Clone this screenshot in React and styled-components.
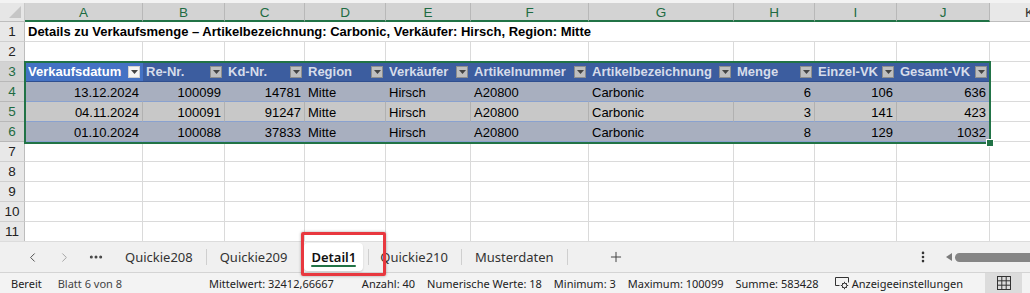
import React from "react";
import styled, { createGlobalStyle } from "styled-components";
import { ChevronLeft, ChevronRight, MoreHorizontal, Plus, MoreVertical } from "lucide-react";

const GREEN = "#217346";

const GlobalStyle = createGlobalStyle`
  html, body {
    margin: 0;
    padding: 0;
    background: #ffffff;
    overflow: hidden;
  }
  body {
    font-family: "Liberation Sans", Arial, sans-serif;
  }
`;

const columns = [
  { key: "A", width: 118 },
  { key: "B", width: 82 },
  { key: "C", width: 80 },
  { key: "D", width: 81 },
  { key: "E", width: 85 },
  { key: "F", width: 118 },
  { key: "G", width: 145 },
  { key: "H", width: 81 },
  { key: "I", width: 82 },
  { key: "J", width: 93 },
  { key: "K", width: 80 },
];

const headers = [
  "Verkaufsdatum",
  "Re-Nr.",
  "Kd-Nr.",
  "Region",
  "Verkäufer",
  "Artikelnummer",
  "Artikelbezeichnung",
  "Menge",
  "Einzel-VK",
  "Gesamt-VK",
];

const rightAligned = [true, true, true, false, false, false, false, true, true, true];

const rows = [
  ["13.12.2024", "100099", "14781", "Mitte", "Hirsch", "A20800", "Carbonic", "6", "106", "636"],
  ["04.11.2024", "100091", "91247", "Mitte", "Hirsch", "A20800", "Carbonic", "3", "141", "423"],
  ["01.10.2024", "100088", "37833", "Mitte", "Hirsch", "A20800", "Carbonic", "8", "129", "1032"],
];

const tabs = ["Quickie208", "Quickie209", "Detail1", "Quickie210", "Musterdaten"];
const activeTab = "Detail1";

const stats = [
  "Mittelwert: 32412,66667",
  "Anzahl: 40",
  "Numerische Werte: 18",
  "Minimum: 3",
  "Maximum: 100099",
  "Summe: 583428",
];

const App = () => {
  const emptyRows = [7, 8, 9, 10, 11];

  return (
    <Page>
      <GlobalStyle />
      <Sheet>
        <Grid>
          <Corner>
            <svg width="12" height="12" viewBox="0 0 12 12">
              <polygon points="12,0 12,12 0,12" fill="#c6c6c6" />
            </svg>
          </Corner>
          {columns.map((col) => (
            <ColHead key={col.key} $selected={col.key !== "K"}>
              {col.key}
            </ColHead>
          ))}

          <RowHead>1</RowHead>
          <TitleCell>
            Details zu Verkaufsmenge – Artikelbezeichnung: Carbonic, Verkäufer: Hirsch, Region: Mitte
          </TitleCell>
          <Cell />

          <RowHead>2</RowHead>
          {columns.map((col) => (
            <Cell key={col.key} />
          ))}

          <RowHead $selected>3</RowHead>
          {headers.map((h, i) => (
            <HeadCell key={h} $active={i === 0}>
              <span>{h}</span>
              <FilterButton $active={i === 0}>
                <svg width="7" height="4" viewBox="0 0 7 4">
                  <polygon points="0,0 7,0 3.5,4" fill="#444" />
                </svg>
              </FilterButton>
            </HeadCell>
          ))}
          <Cell />

          {rows.map((row, r) => (
            <React.Fragment key={r}>
              <RowHead $selected>{r + 4}</RowHead>
              {row.map((v, i) => (
                <DataCell key={i} $band={r % 2 === 1} $right={rightAligned[i]}>
                  {v}
                </DataCell>
              ))}
              <Cell />
            </React.Fragment>
          ))}

          {emptyRows.map((n) => (
            <React.Fragment key={n}>
              <RowHead>{n}</RowHead>
              {columns.map((col) => (
                <Cell key={col.key} />
              ))}
            </React.Fragment>
          ))}
        </Grid>
        <Selection>
          <FillHandle />
        </Selection>
      </Sheet>

      <TabBar>
        <NavButtons>
          <NavButton>
            <ChevronLeft size={15} strokeWidth={1.5} />
          </NavButton>
          <NavButton $disabled>
            <ChevronRight size={15} strokeWidth={1.5} />
          </NavButton>
          <NavButton>
            <MoreHorizontal size={16} strokeWidth={2.5} />
          </NavButton>
        </NavButtons>
        <Tabs>
          {tabs.map((t, i) => (
            <React.Fragment key={t}>
              {i > 0 && t !== activeTab && <TabSep />}
              <Tab $active={t === activeTab} $afterActive={tabs[i - 1] === activeTab}>
                {t}
              </Tab>
            </React.Fragment>
          ))}
          <TabSep />
        </Tabs>
        <AddButton>
          <Plus size={16} strokeWidth={1.5} />
        </AddButton>
        <RightTools>
          <MoreVertical size={14} strokeWidth={2.5} />
          <Scroller>
            <svg width="6" height="8" viewBox="0 0 6 8">
              <polygon points="6,0 6,8 0,4" fill="#7a7a7a" />
            </svg>
            <Thumb />
          </Scroller>
        </RightTools>
      </TabBar>

      <StatusBar>
        <StatusText>Bereit</StatusText>
        <StatusText $muted>Blatt 6 von 8</StatusText>
        <Stats>
          {stats.map((s) => (
            <StatusText key={s}>{s}</StatusText>
          ))}
          <DisplaySettings>
            <svg width="16" height="14" viewBox="0 0 16 14" fill="none" stroke="#333" strokeWidth="1">
              <path d="M1.5 9.5V1.5h13v5" />
              <path d="M1.5 9.5h4" />
              <circle cx="10.5" cy="9.5" r="2.3" />
              <path d="M10.5 5.8v1.2M10.5 12v1.2M6.8 9.5h1.2M13 9.5h1.2M8 7l.8.8M12.2 11.2l.8.8M8 12l.8-.8M12.2 7.8l.8-.8" />
            </svg>
            <StatusText>Anzeigeeinstellungen</StatusText>
          </DisplaySettings>
        </Stats>
        <ViewButton>
          <svg width="16" height="16" viewBox="0 0 16 16" fill="none" stroke="#333" strokeWidth="1">
            <rect x="1.5" y="1.5" width="13" height="13" />
            <path d="M1.5 5.8h13M1.5 10.2h13M5.8 1.5v13M10.2 1.5v13" />
          </svg>
        </ViewButton>
      </StatusBar>

      <Highlight />
    </Page>
  );
};

const Page = styled.div`
  position: relative;
  width: 1030px;
  height: 293px;
  display: flex;
  flex-direction: column;
  overflow: hidden;
`;

const Sheet = styled.div`
  position: relative;
  height: 241px;
  border-top: 3px solid #f3f3f3;
  box-sizing: border-box;
  overflow: hidden;
  flex-shrink: 0;
`;

const Grid = styled.div`
  display: grid;
  grid-template-columns: 25px ${columns.map((c) => `${c.width}px`).join(" ")};
  grid-template-rows: 19px;
  grid-auto-rows: 20px;
`;

const Corner = styled.div`
  background: #e6e6e6;
  border-right: 1px solid #c8c8c8;
  border-bottom: 1px solid #bdbdbd;
  box-sizing: border-box;
  display: flex;
  align-items: flex-end;
  justify-content: flex-end;
  padding: 0 3px 3px 0;
`;

const ColHead = styled.div`
  box-sizing: border-box;
  background: ${(p) => (p.$selected ? "#d3d3d3" : "#e8e8e8")};
  color: ${(p) => (p.$selected ? "#1e6b42" : "#333")};
  border-right: 1px solid ${(p) => (p.$selected ? "#b8b8b8" : "#c8c8c8")};
  border-bottom: ${(p) => (p.$selected ? `2px solid ${GREEN}` : "1px solid #bdbdbd")};
  display: flex;
  align-items: center;
  justify-content: center;
  font-size: 13.5px;
  padding-top: 1px;
  overflow: hidden;
`;

const RowHead = styled.div`
  box-sizing: border-box;
  background: ${(p) => (p.$selected ? "#d3d3d3" : "#e8e8e8")};
  color: ${(p) => (p.$selected ? "#1e6b42" : "#222")};
  border-right: 1px solid #bdbdbd;
  border-bottom: 1px solid ${(p) => (p.$selected ? "#b8b8b8" : "#cfcfcf")};
  display: flex;
  align-items: center;
  justify-content: center;
  font-size: 13.5px;
`;

const Cell = styled.div`
  box-sizing: border-box;
  border-right: 1px solid #dadada;
  border-bottom: 1px solid #dadada;
  background: #ffffff;
`;

const TitleCell = styled.div`
  grid-column: span 10;
  box-sizing: border-box;
  border-bottom: 1px solid #dadada;
  display: flex;
  align-items: center;
  padding-left: 3px;
  font-size: 13px;
  font-weight: bold;
  color: #000;
  white-space: nowrap;
`;

const HeadCell = styled.div`
  box-sizing: border-box;
  background: ${(p) => (p.$active ? "#4472c4" : "#3c5d9f")};
  color: ${(p) => (p.$active ? "#ffffff" : "#d6dcea")};
  border-bottom: 1px solid #2f4f8f;
  display: flex;
  align-items: center;
  padding: 0 3px;
  font-size: 13px;
  font-weight: bold;
  white-space: nowrap;
  overflow: hidden;

  span {
    flex: 1;
    overflow: hidden;
  }
`;

const FilterButton = styled.div`
  flex-shrink: 0;
  width: 12px;
  height: 12px;
  margin-left: 2px;
  box-sizing: border-box;
  background: ${(p) => (p.$active ? "#f4f4f4" : "#bfbfbf")};
  border: 1px solid ${(p) => (p.$active ? "#d0d0d0" : "#8e8e8e")};
  display: flex;
  align-items: center;
  justify-content: center;
`;

const DataCell = styled.div`
  box-sizing: border-box;
  background: ${(p) => (p.$band ? "#c8c8c8" : "#a8afbf")};
  border-bottom: 1px solid #8aa2cf;
  border-right: 1px solid ${(p) => (p.$band ? "#b1b1b1" : "#a8afbf")};
  display: flex;
  align-items: center;
  justify-content: ${(p) => (p.$right ? "flex-end" : "flex-start")};
  padding: 1px 3px 0;
  font-size: 13px;
  color: #000;
  white-space: nowrap;
`;

const Selection = styled.div`
  position: absolute;
  left: 24px;
  top: 58px;
  width: 967px;
  height: 83px;
  box-sizing: border-box;
  border: 2px solid ${GREEN};
  pointer-events: none;
`;

const FillHandle = styled.div`
  position: absolute;
  right: -5px;
  bottom: -5px;
  width: 6px;
  height: 6px;
  background: ${GREEN};
  border: 1px solid #ffffff;
`;

const TabBar = styled.div`
  height: 31px;
  flex-shrink: 0;
  background: #f0f0f0;
  border-top: 1px solid #dcdcdc;
  box-sizing: border-box;
  display: flex;
  align-items: center;
  padding-left: 24px;
  font-family: "Noto Sans", "Open Sans", sans-serif;
`;

const NavButtons = styled.div`
  display: flex;
  align-items: center;
  gap: 16px;
  margin-right: 8px;
`;

const NavButton = styled.div`
  width: 16px;
  height: 20px;
  display: flex;
  align-items: center;
  justify-content: center;
  color: ${(p) => (p.$disabled ? "#a0a0a0" : "#444")};
`;

const Tabs = styled.div`
  display: flex;
  align-items: center;
  height: 100%;
`;

const Tab = styled.div`
  height: 28px;
  display: flex;
  align-items: center;
  padding: ${(p) => (p.$active ? "0 7px" : p.$afterActive ? "0 13px 0 11px" : "0 13px")};
  margin: ${(p) => (p.$active ? "0 5px 0 4px" : "0")};
  font-size: 13px;
  color: ${(p) => (p.$active ? "#111" : "#333")};
  font-weight: ${(p) => (p.$active ? 600 : 400)};
  background: ${(p) => (p.$active ? "#ffffff" : "transparent")};
  border-radius: 4px;
  position: relative;
  box-shadow: ${(p) => (p.$active ? "0 1px 2px rgba(0,0,0,0.15)" : "none")};

  &::after {
    content: "";
    display: ${(p) => (p.$active ? "block" : "none")};
    position: absolute;
    left: 7px;
    right: 7px;
    bottom: 4px;
    height: 2px;
    background: ${GREEN};
    border-radius: 1px;
  }
`;

const TabSep = styled.div`
  width: 1px;
  height: 16px;
  background: #cfcfcf;
`;

const AddButton = styled.div`
  margin-left: 40px;
  display: flex;
  align-items: center;
  color: #444;
`;

const RightTools = styled.div`
  margin-left: auto;
  display: flex;
  align-items: center;
  gap: 10px;
  color: #333;
`;

const Scroller = styled.div`
  display: flex;
  align-items: center;
  gap: 3px;
  padding-left: 6px;
  width: 84px;
`;

const Thumb = styled.div`
  flex: 1;
  height: 9px;
  border-radius: 5px 0 0 5px;
  background: #858585;
`;

const StatusBar = styled.div`
  flex: 1;
  background: #f3f3f3;
  border-top: 1px solid #d4d4d4;
  box-sizing: border-box;
  display: flex;
  align-items: center;
  padding-left: 11px;
  font-family: "Noto Sans", "Open Sans", sans-serif;
`;

const StatusText = styled.span`
  font-size: 11px;
  color: ${(p) => (p.$muted ? "#444" : "#222")};
  white-space: nowrap;

  &:first-child {
    margin-right: 16px;
  }
`;

const Stats = styled.div`
  display: flex;
  align-items: center;
  gap: 12px;
  margin-left: auto;
`;

const DisplaySettings = styled.div`
  display: flex;
  align-items: center;
  gap: 2px;
  margin-left: 3px;
`;

const ViewButton = styled.div`
  margin-left: 22px;
  margin-right: 8px;
  width: 37px;
  height: 100%;
  background: #dcdcdc;
  display: flex;
  align-items: center;
  justify-content: center;
`;

const Highlight = styled.div`
  position: absolute;
  left: 301px;
  top: 232px;
  width: 85px;
  height: 44px;
  box-sizing: border-box;
  border: 3px solid #e8383f;
  border-radius: 2px;
  box-shadow: 0 0 3px rgba(0, 0, 0, 0.35);
  pointer-events: none;
`;

export default App;
